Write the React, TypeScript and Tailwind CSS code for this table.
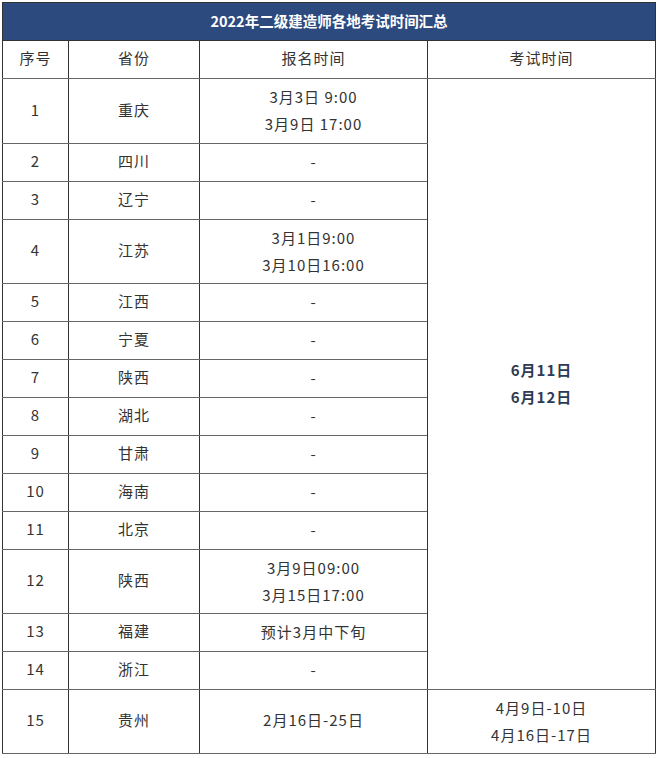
const rows: { no: number; province: string; signup: string[]; h: string }[] = [
  { no: 1, province: '重庆', signup: ['3月3日 9:00', '3月9日 17:00'], h: 'h-[65px]' },
  { no: 2, province: '四川', signup: ['-'], h: 'h-[38px]' },
  { no: 3, province: '辽宁', signup: ['-'], h: 'h-[38px]' },
  { no: 4, province: '江苏', signup: ['3月1日9:00', '3月10日16:00'], h: 'h-[64px]' },
  { no: 5, province: '江西', signup: ['-'], h: 'h-[38px]' },
  { no: 6, province: '宁夏', signup: ['-'], h: 'h-[38px]' },
  { no: 7, province: '陕西', signup: ['-'], h: 'h-[38px]' },
  { no: 8, province: '湖北', signup: ['-'], h: 'h-[38px]' },
  { no: 9, province: '甘肃', signup: ['-'], h: 'h-[38px]' },
  { no: 10, province: '海南', signup: ['-'], h: 'h-[38px]' },
  { no: 11, province: '北京', signup: ['-'], h: 'h-[38px]' },
  { no: 12, province: '陕西', signup: ['3月9日09:00', '3月15日17:00'], h: 'h-[64px]' },
  { no: 13, province: '福建', signup: ['预计3月中下旬'], h: 'h-[38px]' },
  { no: 14, province: '浙江', signup: ['-'], h: 'h-[38px]' },
];

const cell = 'border-x border-x-[#333] border-y border-y-[#666] text-center align-middle p-0 pb-[2px]';

export default function App() {
  return (
    <div
      className="w-[660px] h-[758px] bg-white pt-[2px] pl-[2px] text-[15px] tracking-[1px] text-[#333]"
      style={{ fontFamily: '"Noto Sans CJK SC", "Noto Sans", sans-serif' }}
    >
      <table className="table-fixed border-collapse w-[653px]">
        <colgroup>
          <col className="w-[66px]" />
          <col className="w-[131px]" />
          <col className="w-[228px]" />
          <col className="w-[228px]" />
        </colgroup>
        <thead>
          <tr className="h-[38px]">
            <th
              colSpan={4}
              className="bg-[#2c4a7e] text-white text-[14.5px] font-bold tracking-normal text-center border border-[#333] pb-[2px]"
            >
              2022年二级建造师各地考试时间汇总
            </th>
          </tr>
          <tr className="h-[38px]">
            <th className={`${cell} font-normal`}>序号</th>
            <th className={`${cell} font-normal`}>省份</th>
            <th className={`${cell} font-normal`}>报名时间</th>
            <th className={`${cell} font-normal`}>考试时间</th>
          </tr>
        </thead>
        <tbody>
          {rows.map((r, i) => (
            <tr key={r.no} className={r.h}>
              <td className={cell}>{r.no}</td>
              <td className={cell}>{r.province}</td>
              <td className={`${cell} leading-[27px]`}>
                {r.signup.map(s => (
                  <div key={s}>{s}</div>
                ))}
              </td>
              {i === 0 && (
                <td rowSpan={14} className={`${cell} leading-[27px] font-bold text-[#2e3b52]`}>
                  <div>6月11日</div>
                  <div>6月12日</div>
                </td>
              )}
            </tr>
          ))}
          <tr className="h-[64px]">
            <td className={cell}>15</td>
            <td className={cell}>贵州</td>
            <td className={cell}>2月16日-25日</td>
            <td className={`${cell} leading-[27px]`}>
              <div>4月9日-10日</div>
              <div>4月16日-17日</div>
            </td>
          </tr>
        </tbody>
      </table>
    </div>
  );
}
